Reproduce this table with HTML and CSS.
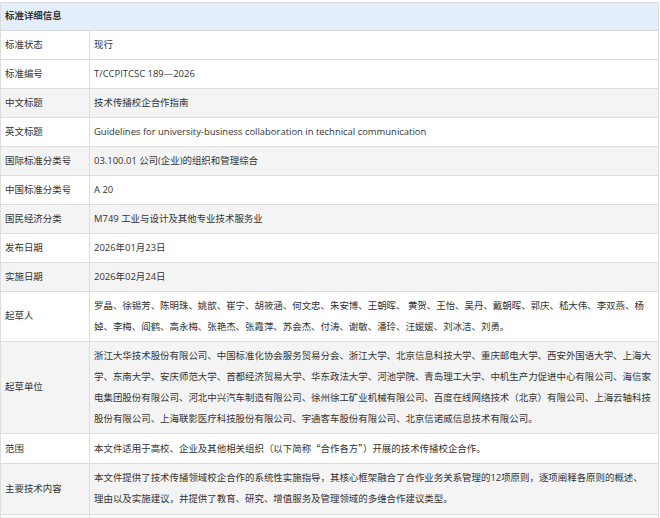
FILE: index.html
```html
<!DOCTYPE html>
<html lang="zh-CN">
<head>
<meta charset="utf-8">
<title>标准详细信息</title>
<link rel="stylesheet" href="styles.css">
</head>
<body>
<div class="page">
  <table class="detail">
    <colgroup><col class="c-label"><col class="c-value"></colgroup>
    <thead>
      <tr class="head"><th colspan="2">标准详细信息</th></tr>
    </thead>
    <tbody>
      <tr><td class="lbl">标准状态</td><td>现行</td></tr>
      <tr><td class="lbl">标准编号</td><td>T/CCPITCSC 189—2026</td></tr>
      <tr class="alt"><td class="lbl">中文标题</td><td>技术传播校企合作指南</td></tr>
      <tr><td class="lbl">英文标题</td><td>Guidelines for university-business collaboration in technical communication</td></tr>
      <tr class="alt"><td class="lbl">国际标准分类号</td><td>03.100.01 公司(企业)的组织和管理综合</td></tr>
      <tr><td class="lbl">中国标准分类号</td><td>A 20</td></tr>
      <tr class="alt"><td class="lbl">国民经济分类</td><td>M749 工业与设计及其他专业技术服务业</td></tr>
      <tr><td class="lbl">发布日期</td><td>2026年01月23日</td></tr>
      <tr class="alt"><td class="lbl">实施日期</td><td>2026年02月24日</td></tr>
      <tr class="multi"><td class="lbl">起草人</td><td>罗晶、徐锡芳、陈明珠、姚歆、崔宁、胡筱涵、何文忠、朱安博、王朝晖、 黄贺、王怡、吴丹、戴朝晖、郭庆、嵇大伟、李双燕、杨<br>婥、李梅、阎鹤、高永梅、张艳杰、张霞萍、苏会杰、付涛、谢敏、潘玲、汪媛媛、刘冰洁、刘勇。</td></tr>
      <tr class="alt multi"><td class="lbl">起草单位</td><td>浙江大华技术股份有限公司、中国标准化协会服务贸易分会、浙江大学、北京信息科技大学、重庆邮电大学、西安外国语大学、上海大<br>学、东南大学、安庆师范大学、首都经济贸易大学、华东政法大学、河池学院、青岛理工大学、中机生产力促进中心有限公司、海信家<br>电集团股份有限公司、河北中兴汽车制造有限公司、徐州徐工矿业机械有限公司、百度在线网络技术（北京）有限公司、上海云轴科技<br>股份有限公司、上海联影医疗科技股份有限公司、宇通客车股份有限公司、北京信诺威信息技术有限公司。</td></tr>
      <tr><td class="lbl">范围</td><td>本文件适用于高校、企业及其他相关组织（以下简称<span class="cjk">“合作各方”</span>）开展的技术传播校企合作。</td></tr>
      <tr class="alt multi"><td class="lbl">主要技术内容</td><td>本文件提供了技术传播领域校企合作的系统性实施指导，其核心框架融合了合作业务关系管理的12项原则，逐项阐释各原则的概述、<br>理由以及实施建议，并提供了教育、研究、增值服务及管理领域的多维合作建议类型。</td></tr>
      <tr><td class="lbl">&nbsp;</td><td>&nbsp;</td></tr>
    </tbody>
  </table>
</div>
</body>
</html>
```

FILE: styles.css
```css
html, body {
  margin: 0;
  padding: 0;
  background: #ffffff;
}

.page {
  padding-top: 2px;
}

.detail {
  width: 659px;
  border-collapse: collapse;
  table-layout: fixed;
  font-family: "Open Sans", "Noto Sans CJK SC", sans-serif;
  font-size: 9.45px;
  line-height: 20px;
  color: #333333;
}

.c-label { width: 89px; }

.detail th,
.detail td {
  border: 1px solid #dddddd;
  padding: 4px 4px 4px 4px;
  text-align: left;
  vertical-align: middle;
  white-space: nowrap;
}

.head th {
  background: #e3f0fc;
  font-weight: bold;
  padding-top: 3px;
  padding-bottom: 4px;
}

.multi td {
  line-height: 20.7px;
}

.alt td {
  background: #f4f4f4;
}

.cjk {
  font-family: "Noto Sans CJK SC", sans-serif;
}
```
